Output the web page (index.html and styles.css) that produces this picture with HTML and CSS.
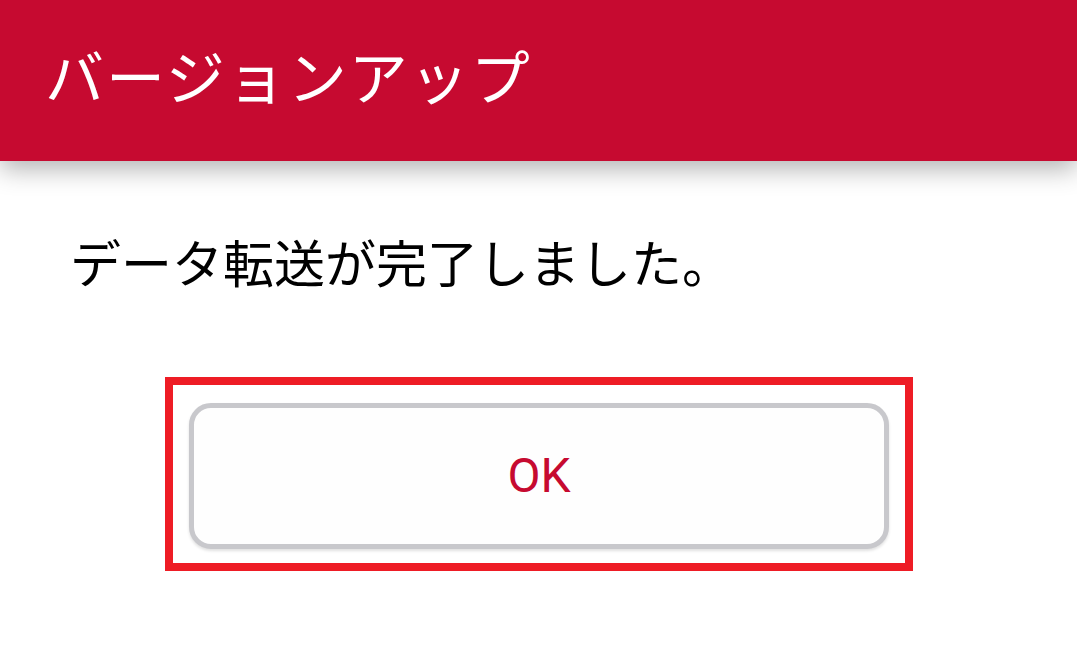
FILE: index.html
```html
<!DOCTYPE html>
<html lang="ja">
<head>
<meta charset="utf-8">
<link rel="stylesheet" href="styles.css">
</head>
<body>
<header class="appbar"><h1 class="title">バージョンアップ</h1></header>
<main class="content">
  <p class="message">データ転送が完了しました。</p>
  <div class="highlight">
    <button class="ok">OK</button>
  </div>
</main>
</body>
</html>
```
FILE: styles.css
```css
html, body {
  margin: 0;
  padding: 0;
  background: #ffffff;
  width: 1077px;
  height: 671px;
  overflow: hidden;
  font-family: "Noto Sans CJK JP", "Noto Sans", sans-serif;
}
.appbar {
  height: 161px;
  background: #c60a30;
  box-shadow: 0 8px 24px rgba(0,0,0,0.3);
  display: flex;
  align-items: center;
  padding-left: 45px;
  position: relative;
  z-index: 1;
}
.title {
  margin: 0;
  color: #ffffff;
  font-weight: 400;
  font-size: 59px;
  line-height: 1;
  margin-top: -12px;
  letter-spacing: 2px;
}
.content {
  display: flex;
  flex-direction: column;
}
.message {
  margin: 75px 0 0 70px;
  font-size: 51px;
  line-height: 1;
  color: #000;
}
.highlight {
  margin: 90px 0 0 165px;
  width: 732px;
  height: 178px;
  border: 8px solid #ee1c25;
  display: flex;
  align-items: center;
  justify-content: center;
}
.ok {
  width: 700px;
  height: 146px;
  border: 5px solid #c8c8cc;
  border-radius: 22px;
  background: #fefefe;
  box-shadow: 0 2px 3px rgba(0,0,0,0.12);
  color: #c60a30;
  font-family: Roboto, "Noto Sans", sans-serif;
  font-size: 48px;
  padding: 0;
  margin-top: 3px;
}
```
